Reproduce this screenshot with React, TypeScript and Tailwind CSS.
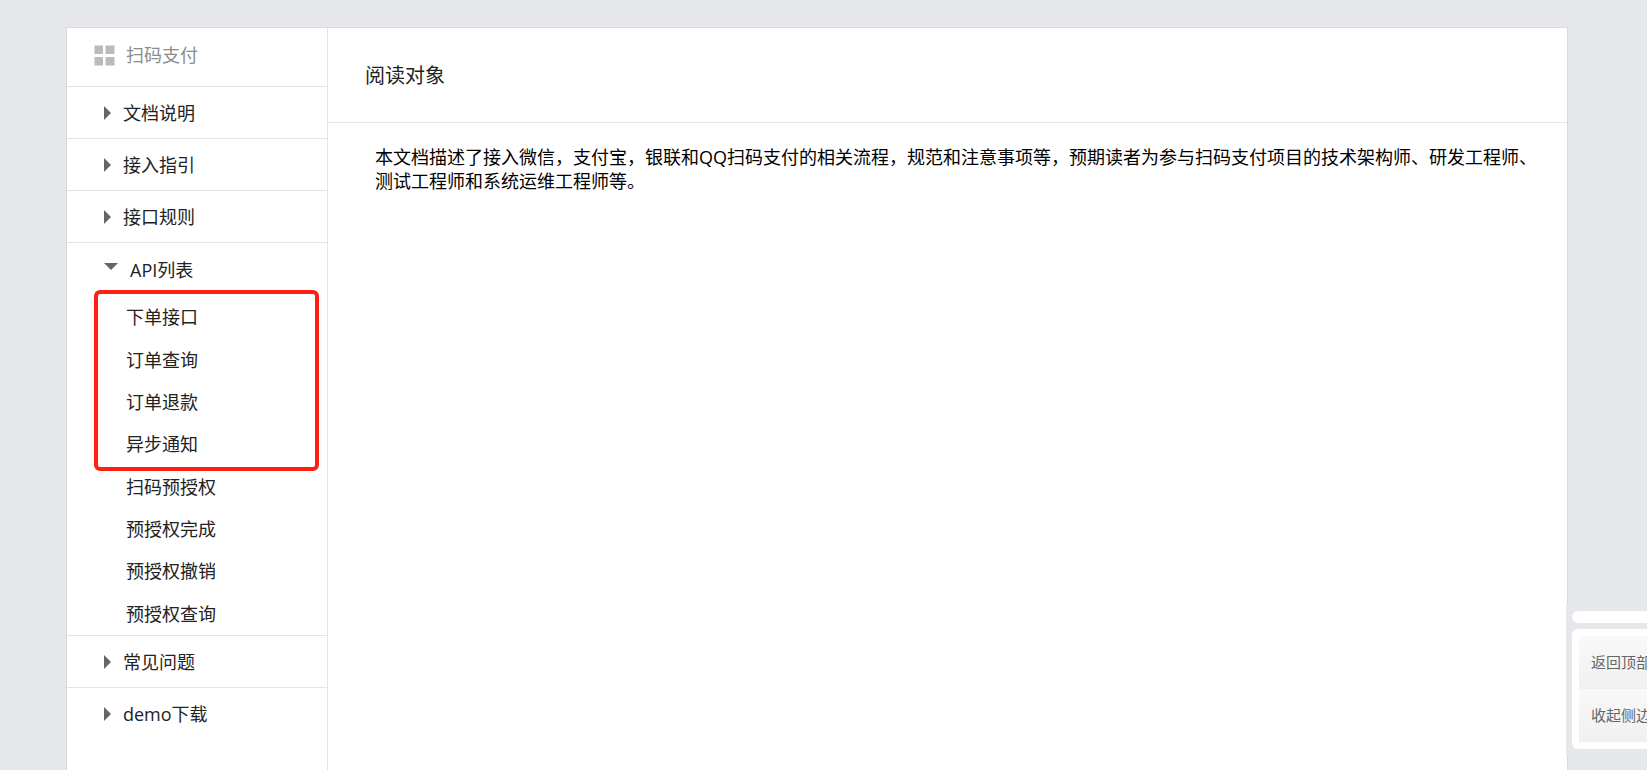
import { useState } from 'react'
import clsx from 'clsx'

type Section = {
  title: string
  children?: string[]
}

const sections: Section[] = [
  { title: '文档说明' },
  { title: '接入指引' },
  { title: '接口规则' },
  {
    title: 'API列表',
    children: [
      '下单接口',
      '订单查询',
      '订单退款',
      '异步通知',
      '扫码预授权',
      '预授权完成',
      '预授权撤销',
      '预授权查询'
    ]
  },
  { title: '常见问题' },
  { title: 'demo下载' }
]

const GridIcon = () => (
  <svg width="21" height="21" viewBox="0 0 21 21" fill="#bbbbbb" aria-hidden="true">
    <rect x="0.5" y="0.5" width="8.5" height="8.5" />
    <rect x="11.5" y="0.5" width="9" height="8.5" />
    <rect x="0.5" y="12" width="8.5" height="8.5" />
    <rect x="11.5" y="12" width="9" height="8.5" />
  </svg>
)

const Arrow = ({ open }: { open: boolean }) =>
  open ? (
    <svg className="mb-1.5" width="14" height="7" viewBox="0 0 14 7" fill="#666666" aria-hidden="true">
      <path d="M0 0h14L7 7z" />
    </svg>
  ) : (
    <svg width="7" height="14" viewBox="0 0 7 14" fill="#666666" aria-hidden="true">
      <path d="M0 0l7 7-7 7z" />
    </svg>
  )

const SidebarSection = ({ section, last }: { section: Section; last: boolean }) => {
  const [open, setOpen] = useState(!!section.children)

  return (
    <li className={clsx(!last && 'border-b border-[#e4e4e7]')}>
      <button
        type="button"
        aria-expanded={open}
        onClick={() => setOpen(!open)}
        className={clsx(
          'flex w-full items-center gap-3 pl-[37px] text-left',
          section.children ? 'h-[53px]' : 'h-[51px]'
        )}
      >
        <Arrow open={open} />
        {section.title}
      </button>
      {open && section.children && (
        <ul className="relative grid h-[339px] auto-rows-fr">
          {section.children.map((child) => (
            <li key={child} className="flex items-center pl-[59px]">
              <a href="#">{child}</a>
            </li>
          ))}
          {/* highlight around the core payment interfaces */}
          <li
            aria-hidden="true"
            className="pointer-events-none absolute -top-1.5 right-2 left-[27px] h-[181px] rounded-md border-4 border-[#ff2013]"
          />
        </ul>
      )}
    </li>
  )
}

const Sidebar = () => (
  <nav className="w-[261px] shrink-0 border-r border-[#e4e4e7] text-lg text-[#222222]">
    <div className="flex h-[59px] items-center gap-[11px] border-b border-[#e4e4e7] pb-1 pl-[27px] text-[#8c8c8c]">
      <GridIcon />
      扫码支付
    </div>
    <ul>
      {sections.map((section, i) => (
        <SidebarSection
          key={section.title}
          section={section}
          last={i === sections.length - 1}
        />
      ))}
    </ul>
  </nav>
)

const FloatingTools = () => (
  <div className="fixed right-0 bottom-[15px] w-[81px] overflow-hidden bg-[#e6e7eb] py-1.5 pl-1.5 text-[15px] text-[#666666]">
    <div className="mb-1.5 h-3 rounded-l-full bg-white" />
    <div className="rounded-l-md bg-white py-[7px] pl-[7px]">
      <button
        type="button"
        className="block h-[53px] w-full overflow-hidden bg-linear-to-b from-[#f9f9f9] to-[#f0f0f0] pl-3 text-left whitespace-nowrap"
      >
        返回顶部
      </button>
      <button
        type="button"
        className="block h-[53px] w-full overflow-hidden bg-linear-to-b from-[#f9f9f9] to-[#f0f0f0] pl-3 text-left whitespace-nowrap"
      >
        收起侧边
      </button>
    </div>
  </div>
)

export default function App() {
  return (
    <div className="flex min-h-screen bg-[#e6e7eb] pt-[27px] pr-[79px] pl-[66px] font-['Open_Sans','Noto_Sans_CJK_SC',sans-serif]">
      <div className="flex flex-1 border border-b-0 border-[#d9d9de] bg-white">
        <Sidebar />
        <main className="min-w-0 flex-1">
          <h1 className="flex h-[95px] items-center border-b border-[#e4e4ea] pt-0.5 pl-[37px] text-xl text-[#222222]">
            阅读对象
          </h1>
          <p className="pt-[22px] pr-6 pl-[47px] text-lg leading-6 text-black">
            本文档描述了接入微信，支付宝，银联和QQ扫码支付的相关流程，规范和注意事项等，预期读者为参与扫码支付项目的技术架构师、研发工程师、测试工程师和系统运维工程师等。
          </p>
        </main>
      </div>
      <FloatingTools />
    </div>
  )
}
